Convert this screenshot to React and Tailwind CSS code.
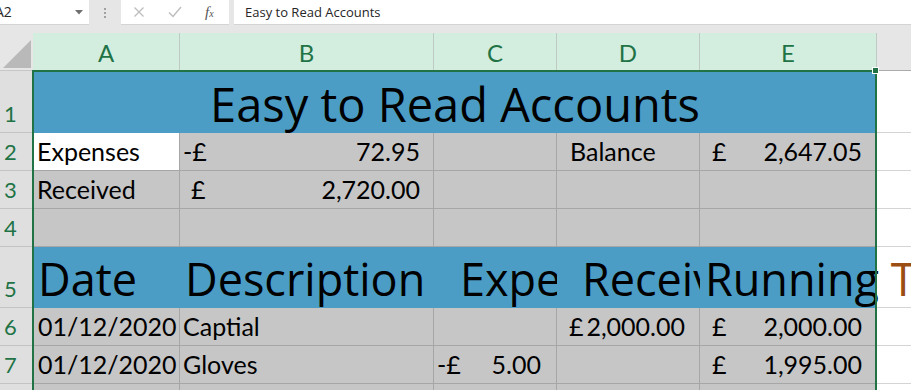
import React from "react";

const rowHead =
  "flex items-end pl-[4px] pb-[7px] bg-[#dfdfdf] border-b border-[#c4c4c4] text-[22px] leading-none text-[#217346]";
const gray =
  "flex items-end pb-[6px] bg-[#c6c6c6] border-r border-b border-[#a6a6a6] overflow-hidden whitespace-nowrap";
const outside = "border-b border-[#d4d4d4]";

function Acc({ sym, num, pl, pr }) {
  return (
    <>
      <span className={pl}>{sym}</span>
      <span className={pr}>{num}</span>
    </>
  );
}

export default function App() {
  return (
    <div className="relative w-[911px] h-[390px] overflow-hidden bg-white font-['Lato',sans-serif] text-[25px] leading-none text-black">
      {/* formula bar */}
      <div className="flex h-[25px] bg-[#e6e6e6] font-['Open_Sans',sans-serif]">
        <div className="flex items-center w-[89px] h-[25px] bg-white border-b border-[#d4d4d4] overflow-hidden">
          <span className="ml-[-5px] text-[14px] leading-none text-[#262626]">A2</span>
          <svg className="ml-auto mr-[6px]" width="8" height="5" viewBox="0 0 8 5">
            <path d="M0 0H8L4 4.5Z" fill="#6f6f6f" />
          </svg>
        </div>
        <div className="flex flex-col items-center justify-center gap-[2px] w-[32px]">
          <div className="w-[2px] h-[2px] bg-[#a0a0a0]" />
          <div className="w-[2px] h-[2px] bg-[#a0a0a0]" />
          <div className="w-[2px] h-[2px] bg-[#a0a0a0]" />
        </div>
        <div className="flex items-center w-[108px] h-[25px] bg-white border-b border-[#d4d4d4]">
          <svg className="ml-[12px]" width="12" height="12" viewBox="0 0 12 12">
            <path d="M1.5 1.5L10.5 10.5M10.5 1.5L1.5 10.5" stroke="#bdbdbd" strokeWidth="1.3" fill="none" />
          </svg>
          <svg className="ml-[23px]" width="14" height="12" viewBox="0 0 14 12">
            <path d="M1 6.5L5 10.5L13 1" stroke="#bdbdbd" strokeWidth="1.4" fill="none" />
          </svg>
          <span className="ml-[23px] font-['Liberation_Serif',serif] italic text-[15px] leading-none text-[#555]">
            f<span className="text-[10px]">x</span>
          </span>
        </div>
        <div className="w-[5px]" />
        <div className="flex items-center flex-1 h-[25px] bg-white border-b border-[#d4d4d4] pl-[11px] text-[13px] leading-none text-[#262626]">
          Easy to Read Accounts
        </div>
      </div>
      <div className="h-[8px] bg-[#e6e6e6]" />

      {/* column headers */}
      <div className="grid grid-cols-[33px_147px_254px_123px_143px_177px_1fr] h-[38px] text-[24px]">
        <div className="flex items-end justify-end pr-[2px] pb-[2px] bg-[#e6e6e6] border-b border-[#c6c6c6]">
          <svg width="28" height="28" viewBox="0 0 28 28">
            <path d="M28 0V28H0Z" fill="#b9b9b9" />
          </svg>
        </div>
        <div className="flex items-end justify-center pb-[5px] bg-[#d3eedf] border-r border-b border-[#bfcac4] text-[#217346]">A</div>
        <div className="flex items-end justify-center pb-[5px] bg-[#d3eedf] border-r border-b border-[#bfcac4] text-[#217346]">B</div>
        <div className="flex items-end justify-center pb-[5px] bg-[#d3eedf] border-r border-b border-[#bfcac4] text-[#217346]">C</div>
        <div className="flex items-end justify-center pb-[5px] bg-[#d3eedf] border-r border-b border-[#bfcac4] text-[#217346]">D</div>
        <div className="flex items-end justify-center pb-[5px] bg-[#d3eedf] border-r border-b border-[#bfcac4] text-[#217346]">E</div>
        <div className="bg-[#e6e6e6] border-b border-[#ababab]" />
      </div>

      {/* row 1 */}
      <div className="grid grid-cols-[33px_147px_254px_123px_143px_177px_1fr] h-[62px]">
        <div className={rowHead}>1</div>
        <div className="col-span-5 flex items-end justify-center pb-[5px] bg-[#4b9dc6] font-['Open_Sans',sans-serif] text-[47px] leading-none">
          Easy to Read Accounts
        </div>
        <div className={outside} />
      </div>

      {/* row 2 */}
      <div className="grid grid-cols-[33px_147px_254px_123px_143px_177px_1fr] h-[38px]">
        <div className={rowHead}>2</div>
        <div className="flex items-end pb-[6px] pl-[4px] bg-white border-r border-b border-[#a6a6a6]">Expenses</div>
        <div className={gray + " justify-between"}>
          <Acc sym="-£" num="72.95" pl="pl-[3px]" pr="pr-[13px]" />
        </div>
        <div className={gray} />
        <div className={gray + " pl-[13px]"}>Balance</div>
        <div className={gray + " justify-between"}>
          <Acc sym="£" num="2,647.05" pl="pl-[12px]" pr="pr-[14px]" />
        </div>
        <div className={outside} />
      </div>

      {/* row 3 */}
      <div className="grid grid-cols-[33px_147px_254px_123px_143px_177px_1fr] h-[38px]">
        <div className={rowHead}>3</div>
        <div className={gray + " pl-[4px]"}>Received</div>
        <div className={gray + " justify-between"}>
          <Acc sym="£" num="2,720.00" pl="pl-[11px]" pr="pr-[13px]" />
        </div>
        <div className={gray} />
        <div className={gray} />
        <div className={gray} />
        <div className={outside} />
      </div>

      {/* row 4 */}
      <div className="grid grid-cols-[33px_147px_254px_123px_143px_177px_1fr] h-[38px]">
        <div className={rowHead}>4</div>
        <div className={gray} />
        <div className={gray} />
        <div className={gray} />
        <div className={gray} />
        <div className={gray} />
        <div className={outside} />
      </div>

      {/* row 5 */}
      <div className="grid grid-cols-[33px_147px_254px_123px_143px_177px_1fr] h-[61px] font-['Open_Sans',sans-serif] text-[45px]">
        <div className={rowHead + " font-['Lato',sans-serif] text-[22px]"}>5</div>
        <div className="flex items-end pb-[7px] pl-[5px] bg-[#4b9dc6] overflow-hidden whitespace-nowrap">Date</div>
        <div className="flex items-end pb-[7px] pl-[5px] bg-[#4b9dc6] overflow-hidden whitespace-nowrap">Description</div>
        <div className="flex items-end pb-[7px] pl-[26px] bg-[#4b9dc6] overflow-hidden whitespace-nowrap">Expenses</div>
        <div className="flex items-end pb-[7px] pl-[25px] bg-[#4b9dc6] overflow-hidden whitespace-nowrap">Received</div>
        <div className="flex items-end pb-[7px] pl-[5px] bg-[#4b9dc6] whitespace-nowrap">
          <span>Running</span>
          <span className="text-[#9a4e14]">&nbsp;Total</span>
        </div>
        <div className={outside} />
      </div>

      {/* row 6 */}
      <div className="grid grid-cols-[33px_147px_254px_123px_143px_177px_1fr] h-[38px]">
        <div className={rowHead}>6</div>
        <div className={gray + " pl-[5px]"}>01/12/2020</div>
        <div className={gray + " pl-[3px]"}>Captial</div>
        <div className={gray} />
        <div className={gray + " justify-between"}>
          <Acc sym="£" num="2,000.00" pl="pl-[12px]" pr="pr-[14px]" />
        </div>
        <div className={gray + " justify-between"}>
          <Acc sym="£" num="2,000.00" pl="pl-[12px]" pr="pr-[14px]" />
        </div>
        <div className={outside} />
      </div>

      {/* row 7 */}
      <div className="grid grid-cols-[33px_147px_254px_123px_143px_177px_1fr] h-[38px]">
        <div className={rowHead}>7</div>
        <div className={gray + " pl-[5px]"}>01/12/2020</div>
        <div className={gray + " pl-[3px]"}>Gloves</div>
        <div className={gray + " justify-between"}>
          <Acc sym="-£" num="5.00" pl="pl-[3px]" pr="pr-[15px]" />
        </div>
        <div className={gray} />
        <div className={gray + " justify-between"}>
          <Acc sym="£" num="1,995.00" pl="pl-[12px]" pr="pr-[14px]" />
        </div>
        <div className={outside} />
      </div>

      {/* row 8 */}
      <div className="grid grid-cols-[33px_147px_254px_123px_143px_177px_1fr] h-[38px]">
        <div className={rowHead}>8</div>
        <div className={gray} />
        <div className={gray} />
        <div className={gray} />
        <div className={gray} />
        <div className={gray} />
        <div className={outside} />
      </div>

      {/* selection border */}
      <div className="absolute left-[32px] top-[70px] w-[845px] h-[340px] border-2 border-[#217346] pointer-events-none" />
      <div className="absolute left-[872px] top-[67px] w-[7px] h-[7px] bg-[#217346] border border-white pointer-events-none" />
    </div>
  );
}
